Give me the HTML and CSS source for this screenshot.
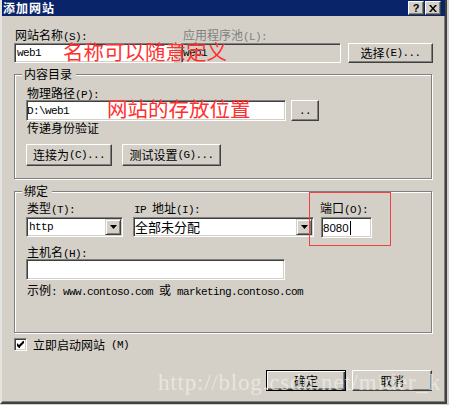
FILE: index.html
```html
<!DOCTYPE html>
<html>
<head>
<meta charset="utf-8">
<link rel="stylesheet" href="styles.css">
</head>
<body>
<div class="dialog">
  <div class="titlebar">
    <span class="title">添加网站</span>
    <div class="tbtns">
      <span class="tbtn help">?</span>
      <span class="tbtn"><svg width="8" height="7" viewBox="0 0 8 7"><path d="M0 0h2l2 2.4L6 0h2L5 3.5 8 7H6L4 4.6 2 7H0l3-3.5z"/></svg></span>
    </div>
  </div>
  <div class="content">
    <div class="toprow">
      <span class="lbl">网站名称<span class="m">(S):</span></span>
      <span class="lbl dis">应用程序池<span class="m">(L):</span></span>
      <span></span>
      <div class="field"><span class="m">web1</span></div>
      <div class="field off"><span class="m">web1</span></div>
      <button class="btn">选择<span class="m">(E)...</span></button>
    </div>

    <div class="group g1">
      <span class="legend">内容目录</span>
      <span class="lbl">物理路径<span class="m">(P):</span></span>
      <div class="pathrow">
        <div class="field path"><span class="m">D:\web1</span></div>
        <button class="btn dots"><span class="m">..</span></button>
      </div>
      <span class="lbl">传递身份验证</span>
      <div class="btnrow">
        <button class="btn b-conn">连接为<span class="m">(C)...</span></button>
        <button class="btn b-test">测试设置<span class="m">(G)...</span></button>
      </div>
    </div>

    <div class="group g2">
      <span class="legend">绑定</span>
      <div class="bindrow">
        <div class="col c-type">
          <span class="lbl">类型<span class="m">(T):</span></span>
          <div class="select"><span class="val"><span class="m">http</span></span><span class="drop"><svg width="7" height="4" viewBox="0 0 7 4"><path d="M0 0h7L3.5 4z"/></svg></span></div>
        </div>
        <div class="col c-ip">
          <span class="lbl"><span class="m">IP </span>地址<span class="m">(I):</span></span>
          <div class="select"><span class="val ipval">全部未分配</span><span class="drop"><svg width="7" height="4" viewBox="0 0 7 4"><path d="M0 0h7L3.5 4z"/></svg></span></div>
        </div>
        <div class="col c-port">
          <span class="lbl plbl">端口<span class="m">(O):</span></span>
          <div class="field port"><span class="num">8080</span><span class="caret"></span></div>
        </div>
      </div>
      <span class="lbl host">主机名<span class="m">(H):</span></span>
      <div class="field hostin"></div>
      <span class="lbl example">示例<span class="m">: www.contoso.com </span>或<span class="m"> marketing.contoso.com</span></span>
      <div class="redbox"></div>
    </div>

    <div class="check"><span class="cb"><svg width="7" height="7" viewBox="0 0 7 7"><path d="M6 0h1v2L3 6v1H2L0 5V2l2 2z"/></svg></span>立即启动网站<span class="m">(M)</span></div>

    <div class="actions">
      <button class="btn default">确定</button>
      <button class="btn">取消</button>
    </div>

    <div class="note n1">名称可以随意定义</div>
    <div class="note n2">网站的存放位置</div>
    <div class="watermark">http://blog.csdn.net/mider_k</div>
  </div>
</div>
</body>
</html>
```
FILE: styles.css
```css
* { box-sizing: border-box; margin: 0; padding: 0; }
html, body { width: 449px; height: 405px; overflow: hidden; }
body {
  background: #d4d0c8;
  font-family: "Noto Sans CJK SC", "Liberation Sans", sans-serif;
  font-size: 12px;
  line-height: 14px;
  color: #000;
}
.m {
  font-family: "Liberation Mono", monospace;
  font-size: 11px;
  letter-spacing: -0.6px;
  line-height: 10px;
}
.dialog {
  width: 447px;
  height: 404px;
  background: #d4d0c8;
  border-left: 2px solid #e6e4e0;
  border-right: 2px solid #404040;
  border-bottom: 2px solid #404040;
  box-shadow: inset -1px -1px 0 #808080;
  display: flex;
  flex-direction: column;
}
.titlebar {
  height: 16px;
  flex: none;
  background: #0a246a;
  color: #fff;
  display: flex;
  align-items: center;
  justify-content: space-between;
  padding: 0 4px 0 1px;
}
.title { font-weight: bold; font-size: 12px; letter-spacing: 1px; line-height: 16px; }
.tbtns { display: flex; gap: 1px; }
.tbtn {
  width: 16px;
  height: 14px;
  background: #d4d0c8;
  border: 1px solid;
  border-color: #fff #404040 #404040 #fff;
  box-shadow: inset -1px -1px 0 #808080;
  display: flex;
  align-items: center;
  justify-content: center;
  color: #000;
  font: bold 11px "Liberation Sans", sans-serif;
}
.content {
  position: relative;
  flex: 1;
  padding: 12px 12px 0 12px;
}
.toprow {
  display: grid;
  grid-template-columns: 160px 160px 85px;
  column-gap: 7px;
  row-gap: 1px;
}
.lbl { display: block; padding-left: 1px; line-height: 14px; white-space: nowrap; }
.dis { color: #808080; padding-left: 2px; }
.field {
  height: 20px;
  background: #fff;
  border: 1px solid;
  border-color: #808080 #fff #fff #808080;
  box-shadow: inset 1px 1px 0 #404040, inset -1px -1px 0 #d4d0c8;
  display: flex;
  align-items: center;
  padding-left: 2px;
}
.field.off { background: #d4d0c8; padding-left: 1px; }
.btn {
  font: inherit;
  background: #d4d0c8;
  border: 1px solid;
  border-color: #fff #404040 #404040 #fff;
  box-shadow: inset -1px -1px 0 #808080;
  color: #000;
  height: 20px;
  display: flex;
  align-items: center;
  justify-content: center;
  padding: 0;
  white-space: nowrap;
}
.group {
  position: relative;
  width: 418px;
  border: 1px solid #808080;
  box-shadow: inset 1px 1px 0 #fff, 1px 1px 0 #fff;
}
.legend {
  position: absolute;
  top: -8px;
  left: 7px;
  padding: 0 4px 0 2px;
  background: #d4d0c8;
  line-height: 14px;
}
.g1 { margin-top: 11px; padding: 11px 11px 12px 11px; }
.pathrow { display: flex; gap: 5px; height: 21px; }
.path { width: 260px; height: 21px; padding-left: 0; }
.dots { width: 28px; height: 21px; }
.btnrow { display: flex; gap: 10px; margin-top: 9px; }
.b-conn { width: 86px; height: 22px; }
.b-test { width: 99px; height: 22px; }

.g2 { margin-top: 12px; padding: 9px 11px 35px 11px; }
.bindrow { display: flex; align-items: flex-start; }
.col { display: flex; flex-direction: column; gap: 2px; }
.c-type { width: 97px; margin-right: 10px; }
.c-ip { width: 181px; margin-right: 6px; }
.plbl { padding-left: 0; }
.select {
  height: 20px;
  display: flex;
  background: #fff;
  border: 1px solid;
  border-color: #808080 #fff #fff #808080;
  box-shadow: inset 1px 1px 0 #404040, inset -1px -1px 0 #d4d0c8;
  padding: 1px;
}
.val { flex: 1; display: flex; align-items: center; padding-left: 1px; white-space: nowrap; }
.ipval { font-size: 13px; padding-left: 0; }
.drop {
  width: 16px;
  height: 16px;
  flex: none;
  background: #d4d0c8;
  border: 1px solid;
  border-color: #d4d0c8 #404040 #404040 #d4d0c8;
  box-shadow: inset 1px 1px 0 #fff, inset -1px -1px 0 #808080;
  display: flex;
  align-items: center;
  justify-content: center;
}
.drop svg { fill: #000; display: block; }
.port { width: 51px; height: 21px; margin-left: 1px; padding-left: 1px; }
.num { font-family: "Liberation Sans", sans-serif; font-size: 11.5px; }
.caret { width: 1px; height: 14px; background: #000; margin-left: 1px; }
.host { margin-top: 7px; line-height: 13px; }
.hostin { width: 259px; height: 21px; }
.example { margin-top: 3px; }
.redbox {
  position: absolute;
  left: 294px;
  top: 0;
  width: 82px;
  height: 54px;
  border: 1px solid #f04040;
}
.check {
  margin-top: 5px;
  display: flex;
  align-items: center;
  gap: 6px;
  line-height: 13px;
  height: 13px;
}
.cb {
  width: 13px;
  height: 13px;
  background: #fff;
  border: 1px solid;
  border-color: #808080 #fff #fff #808080;
  box-shadow: inset 1px 1px 0 #404040, inset -1px -1px 0 #d4d0c8;
  display: flex;
  align-items: center;
  justify-content: center;
}
.cb svg { fill: #000; display: block; }
.actions {
  display: flex;
  justify-content: flex-end;
  gap: 6px;
  margin-top: 19px;
  padding-right: 1px;
}
.actions .btn { width: 80px; height: 21px; }
.actions .default {
  border: 1px solid #000;
  box-shadow: inset 1px 1px 0 #fff, inset -1px -1px 0 #404040, inset -2px -2px 0 #808080;
}
.note {
  position: absolute;
  color: #ff3030;
  font-size: 20.5px;
  line-height: 20px;
  white-space: nowrap;
}
.n1 { left: 61px; top: 25px; }
.n2 { left: 105px; top: 82px; }
.watermark {
  position: absolute;
  left: 156px;
  top: 356px;
  font-family: "Liberation Serif", serif;
  font-size: 23px;
  line-height: 22px;
  letter-spacing: 0.8px;
  color: rgba(238, 236, 232, 0.75);
  white-space: nowrap;
}
```
